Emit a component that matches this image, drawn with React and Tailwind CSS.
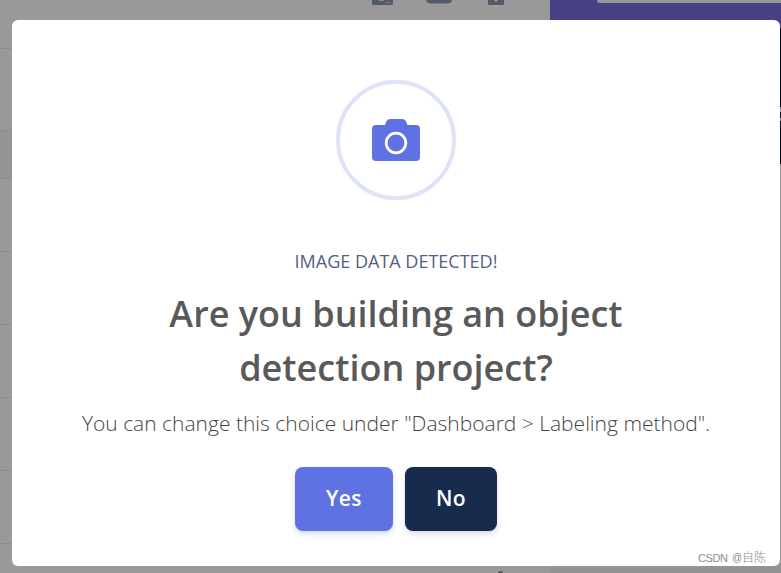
const rows = ['h-[73px]', 'h-[73px]', 'h-[73px]', 'h-[73px]', 'h-[73px]'];

function Backdrop() {
  return (
    <div className="flex h-full w-full">
      <div className="flex w-[550px] shrink-0 flex-col bg-[#999999]">
        <div className="flex h-[49px] shrink-0 items-start border-b border-[#8c8d8e] pl-[371px]">
          <svg className="h-[6px] w-[22px]" viewBox="0 0 22 6">
            <path d="M1 0h21v4a1 1 0 0 1-1 1H2a1 1 0 0 1-1-1z" fill="#535b69" />
            <path d="M8 0h5v1H8zM15 2h2v1h-2zM18 2h2v1h-2z" fill="#858a91" />
          </svg>
          <svg className="ml-[33px] h-[6px] w-[27px]" viewBox="0 0 27 6">
            <path d="M0 0h26c0 2-2 3.500-5 3.500H5C2 3.500 0 2 0 0z" fill="#535b69" />
          </svg>
          <svg className="ml-[34px] h-[6px] w-[18px]" viewBox="0 0 18 6">
            <path d="M1 0h16v4a1 1 0 0 1-1 1H2a1 1 0 0 1-1-1z" fill="#535b69" />
            <path d="M7 0h4L9 2z" fill="#999" />
          </svg>
        </div>
        <div className="h-[81px] shrink-0" />
        <div className="h-[49px] shrink-0 border-y border-[#8c8d8e] bg-[#939597]" />
        {rows.map((height, i) => (
          <div key={i} className={`${height} shrink-0 border-b border-[#8c8d8e]`} />
        ))}
        <div className="flex grow items-end pl-[498px]">
          <div className="h-[2px] w-[5px] rounded-t-full bg-[#535b69]" />
        </div>
      </div>
      <div className="flex grow flex-col bg-[#929395]">
        <div className="flex h-[28px] shrink-0 items-start justify-end bg-[#474085]">
          <div className="h-[3px] w-[184px] rounded-bl-[5px] bg-[#999999]" />
        </div>
        <div className="flex h-[136px] shrink-0 flex-col items-end bg-[#030b1c] pt-[79px]">
          <div className="h-[5px] w-px bg-[#8a8f98]" />
          <div className="mt-[6px] h-[3px] w-px bg-[#8a8f98]" />
        </div>
      </div>
    </div>
  );
}

function CameraBadge() {
  return (
    <div className="flex size-[120px] items-center justify-center rounded-full border-4 border-[#dfe3fa]">
      <svg className="h-[42px] w-[48px]" viewBox="0 0 48 42">
        <path
          d="M4 6h9l1.200-3.300A4 4 0 0 1 18 0h12.500a4 4 0 0 1 3.700 2.700L35.400 6H44a4 4 0 0 1 4 4v28a4 4 0 0 1-4 4H4a4 4 0 0 1-4-4V10a4 4 0 0 1 4-4z"
          fill="#5e72e4"
        />
        <circle cx="24" cy="24" r="9.800" fill="none" stroke="#fff" strokeWidth="2.700" />
      </svg>
    </div>
  );
}

export default function App() {
  return (
    <div className="relative h-[573px] w-[781px] overflow-hidden font-['Open_Sans','Noto_Sans_CJK_SC',sans-serif]">
      <Backdrop />
      <div className="absolute top-[20px] left-[12px] flex h-[546px] w-[768px] flex-col items-center rounded-[6px] bg-white pt-[60px]">
        <CameraBadge />
        <p className="mt-[48px] text-[18px] leading-[27px] whitespace-nowrap text-[#525f7f]">IMAGE DATA DETECTED!</p>
        <h2 className="mt-[12px] text-center text-[36px] leading-[54px] font-semibold whitespace-nowrap text-[#595959]">
          Are you building an object
          <br />
          detection project?
        </h2>
        <p className="mt-[12px] text-[21px] leading-[32px] font-light whitespace-nowrap text-[#454545]">
          You can change this choice under "Dashboard &gt; Labeling method".
        </p>
        <div className="mt-[28px] flex gap-[12px] text-[21px] font-[650] tracking-[0.4px] text-white">
          <button className="h-[64px] w-[98px] rounded-[8px] bg-[#5e72e4] shadow-[0_4px_6px_rgba(50,50,93,0.11),0_1px_3px_rgba(0,0,0,0.08)]">
            Yes
          </button>
          <button className="h-[64px] w-[92px] rounded-[8px] bg-[#172b4d] shadow-[0_4px_6px_rgba(50,50,93,0.11),0_1px_3px_rgba(0,0,0,0.08)]">
            No
          </button>
        </div>
      </div>
      <div className="absolute top-[550px] left-[698px] flex items-center font-['Liberation_Sans','Noto_Sans_CJK_SC',sans-serif] leading-[16px] font-light whitespace-nowrap text-[#8e8e8e]">
        <span className="w-[34px] text-[11px] tracking-[-0.4px]">CSDN</span>
        <span className="w-[10px] text-[10px]">@</span>
        <span className="text-[12px]">自陈</span>
      </div>
    </div>
  );
}
